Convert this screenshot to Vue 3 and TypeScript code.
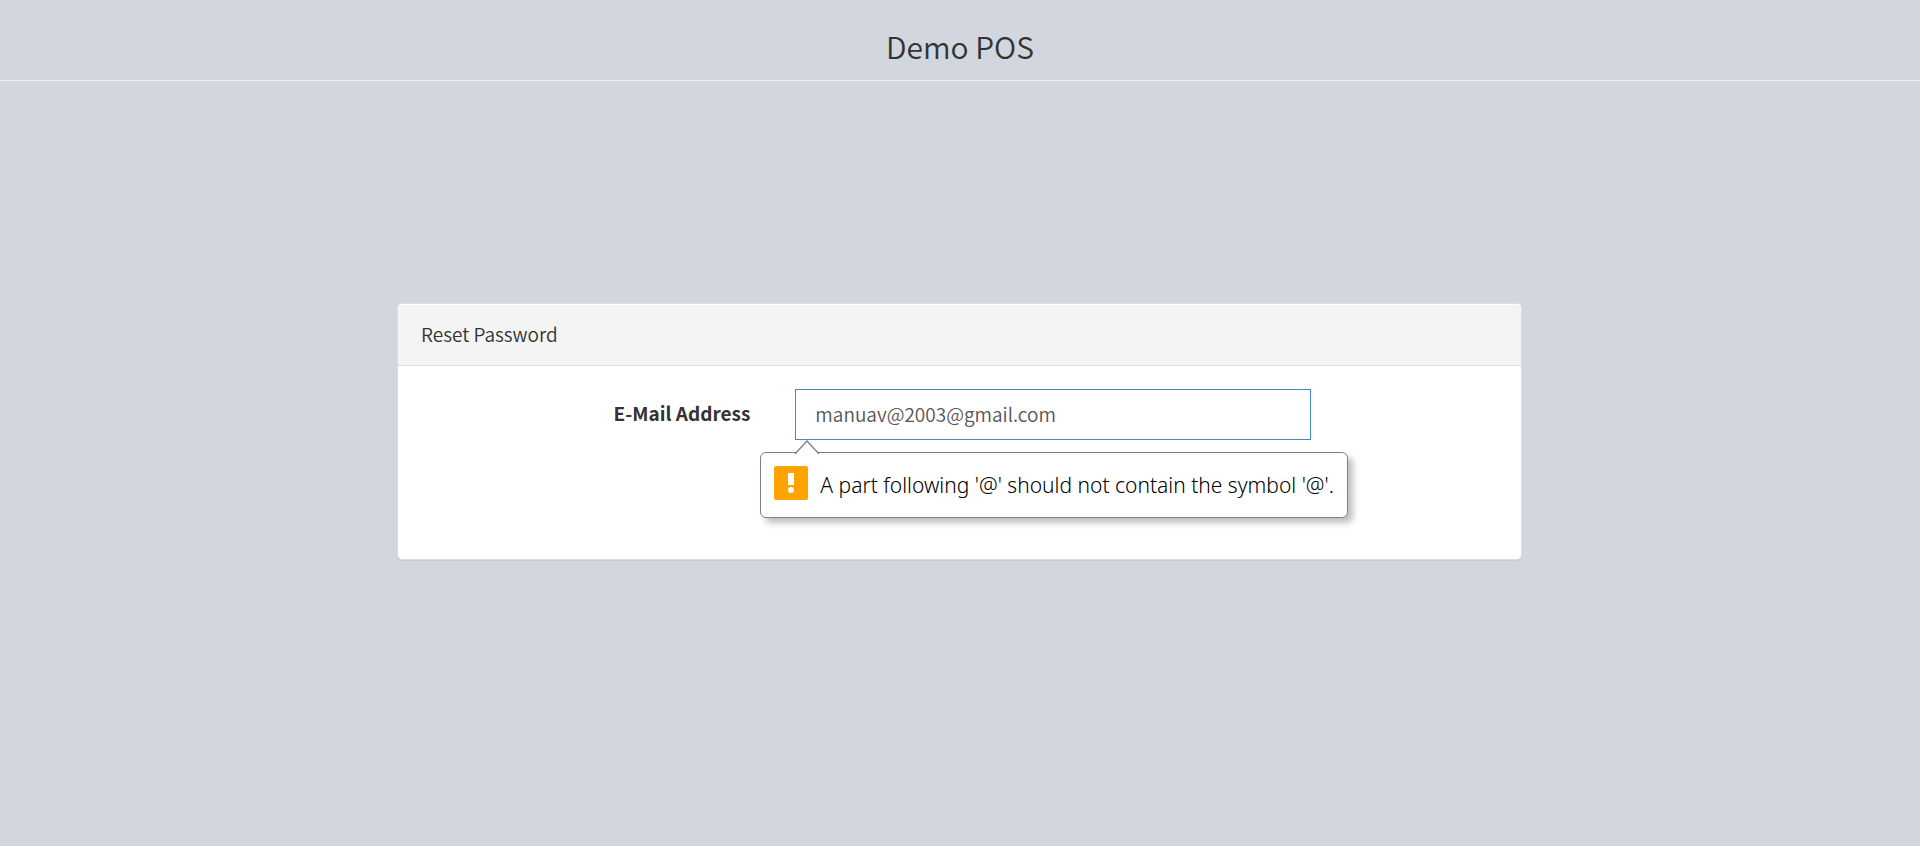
<script setup lang="ts">
import { ref } from 'vue'

const email = ref<string>('manuav@2003@gmail.com')
const message = "A part following '@' should not contain the symbol '@'."
</script>

<template>
  <div class="page">
    <header class="brand">
      <h1 class="brand-title">Demo POS</h1>
    </header>
    <main class="content">
      <section class="panel">
        <h2 class="panel-heading">Reset Password</h2>
        <form class="panel-body" novalidate @submit.prevent>
          <div class="row">
            <label class="label" for="email">E-Mail Address</label>
            <div class="field">
              <input id="email" v-model="email" class="input" type="email" name="email" aria-describedby="email-error" spellcheck="false" />
              <div id="email-error" class="bubble" role="alert">
                <svg class="arrow" viewBox="0 0 26 14" aria-hidden="true">
                  <path d="M1 14 L13 1 L25 14" fill="#fff" stroke="#7f7f7f" stroke-width="1.3" />
                </svg>
                <svg class="warning" viewBox="0 0 34 34" aria-hidden="true">
                  <rect width="34" height="34" rx="2" fill="#ffa300" />
                  <rect x="14" y="7" width="6" height="12" fill="#fff" />
                  <circle cx="17" cy="24" r="3" fill="#fff" />
                </svg>
                <span class="message">{{ message }}</span>
              </div>
            </div>
          </div>
        </form>
      </section>
    </main>
  </div>
</template>

<style>
body {
  background: #d2d6de;
}
</style>

<style scoped>
.page {
  min-height: 100vh;
  background: #d2d6de;
  color: #333;
  font-family: "Noto Sans CJK SC", "Noto Sans", sans-serif;
  font-size: 19px;
}

.brand {
  padding: 22px 24px 10px;
  border-bottom: 1px solid #eee;
}

.brand-title {
  margin: 0;
  font-size: 30px;
  font-weight: 350;
  line-height: 48px;
  text-align: center;
}

.content {
  padding: 222px 25px 24px 24px;
}

.panel {
  box-sizing: border-box;
  max-width: 1125px;
  margin: 0 auto;
  border: 1px solid #ddd;
  border-radius: 5px;
  background: #fff;
  box-shadow: 0 1px 1px rgba(0, 0, 0, 0.05);
}

.panel-heading {
  margin: 0;
  padding: 16px 23px 18px;
  border: 1px solid #fff;
  border-width: 1px 0 0;
  border-radius: 4px 4px 0 0;
  background: #f4f4f4;
  box-shadow: 0 1px 0 #ddd;
  font-size: 19px;
  font-weight: 350;
  line-height: 26px;
}

.panel-body {
  padding: 24px 0 119px;
}

.row {
  display: grid;
  grid-template-columns: 4fr 6fr 2fr;
}

.label {
  padding: 11px 22px;
  font-weight: 700;
  line-height: 26px;
  text-align: right;
}

.field {
  position: relative;
  padding: 0 23px;
}

.input {
  box-sizing: border-box;
  display: block;
  width: 100%;
  height: 51px;
  padding: 8px 19px 10px;
  border: 1px solid #3c8dbc;
  border-radius: 0;
  outline: none;
  background: #fff;
  color: #555;
  font-family: inherit;
  font-size: 19px;
  font-weight: 350;
}

.bubble {
  position: absolute;
  top: 63px;
  left: -12px;
  z-index: 1;
  box-sizing: border-box;
  display: flex;
  gap: 12px;
  padding: 13px;
  border: 1px solid #7f7f7f;
  border-radius: 6px;
  background: #fff;
  box-shadow: 5px 5px 6px rgba(0, 0, 0, 0.25);
  color: #000;
  white-space: nowrap;
}

.arrow {
  position: absolute;
  top: -13px;
  left: 33px;
  width: 26px;
  height: 14px;
}

.warning {
  width: 34px;
  height: 34px;
  flex: none;
}

.message {
  padding: 2px 0;
  font-family: "Noto Sans", "Open Sans", sans-serif;
  font-size: 21px;
  font-weight: 300;
  line-height: 34px;
}
</style>
